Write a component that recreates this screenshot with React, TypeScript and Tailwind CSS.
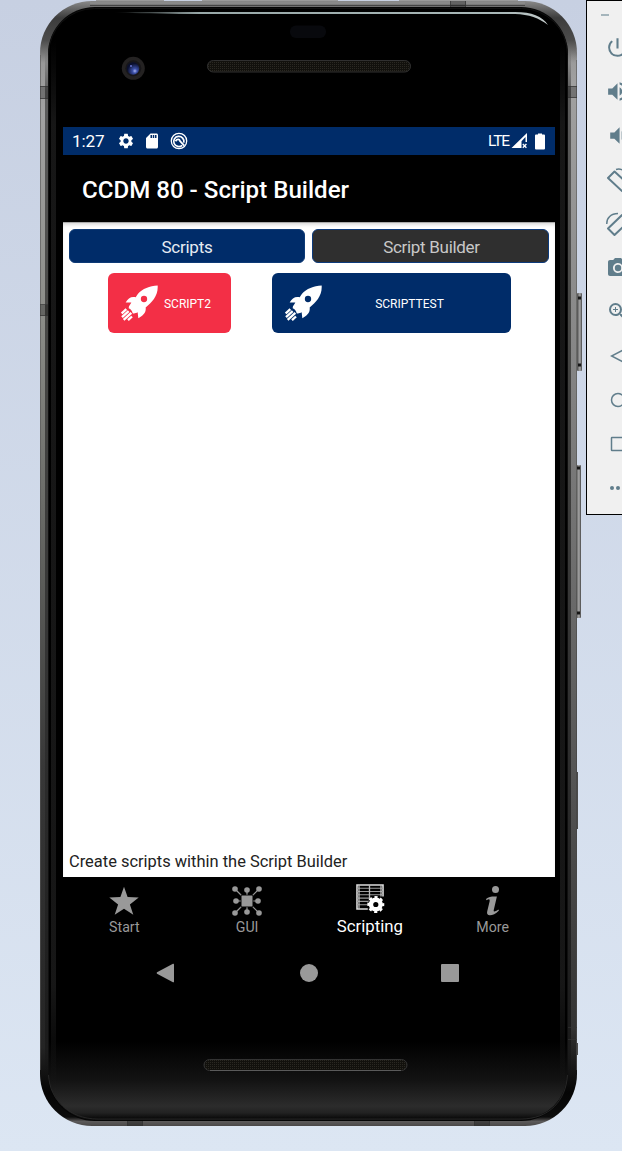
import type { ReactNode } from "react";
import {
  MdCameraAlt,
  MdPowerSettingsNew,
  MdSdCard,
  MdSettings,
  MdVolumeDown,
  MdVolumeUp,
  MdZoomIn,
} from "react-icons/md";

function DeviceBody() {
  return (
    <svg className="absolute inset-0" width="622" height="1151" viewBox="0 0 622 1151" fill="none" aria-hidden="true">
      <defs>
        <linearGradient id="rail" x1="0" y1="0" x2="0" y2="1">
          <stop offset="0" stopColor="#8a8a8a" />
          <stop offset="0.006" stopColor="#6a6a6a" />
          <stop offset="0.015" stopColor="#3c3c3c" />
          <stop offset="0.035" stopColor="#4c4c4c" />
          <stop offset="0.055" stopColor="#989898" />
          <stop offset="0.1" stopColor="#a2a2a2" />
          <stop offset="0.28" stopColor="#8c8d88" />
          <stop offset="0.45" stopColor="#6a6b67" />
          <stop offset="0.68" stopColor="#383838" />
          <stop offset="0.93" stopColor="#242424" />
          <stop offset="0.97" stopColor="#050505" />
          <stop offset="0.992" stopColor="#0c0c0c" />
          <stop offset="0.996" stopColor="#5c5a5a" />
          <stop offset="1" stopColor="#4a4848" />
        </linearGradient>
        <linearGradient id="railInner" x1="0" y1="0" x2="0" y2="1">
          <stop offset="0" stopColor="#5c5c5c" stopOpacity="0" />
          <stop offset="0.04" stopColor="#5c5c5c" />
          <stop offset="0.25" stopColor="#484846" />
          <stop offset="0.6" stopColor="#333" />
          <stop offset="0.95" stopColor="#1c1c1c" />
          <stop offset="1" stopColor="#101010" stopOpacity="0" />
        </linearGradient>
        <linearGradient id="railRight" x1="0" y1="0" x2="0" y2="1">
          <stop offset="0" stopColor="#a0a0a0" stopOpacity="0" />
          <stop offset="0.04" stopColor="#a0a0a0" />
          <stop offset="0.3" stopColor="#858585" />
          <stop offset="0.65" stopColor="#5c5c5c" />
          <stop offset="0.95" stopColor="#333" />
          <stop offset="1" stopColor="#111" stopOpacity="0" />
        </linearGradient>
        <linearGradient id="glass" x1="0" y1="0" x2="0" y2="1">
          <stop offset="0" stopColor="#000" />
          <stop offset="0.93" stopColor="#000" />
          <stop offset="0.965" stopColor="#131313" />
          <stop offset="0.988" stopColor="#2c2c2c" />
          <stop offset="0.994" stopColor="#222" />
          <stop offset="1" stopColor="#050505" />
        </linearGradient>
        <linearGradient id="edge" x1="0" y1="0" x2="0" y2="1">
          <stop offset="0" stopColor="#1c1c1c" stopOpacity="0" />
          <stop offset="0.08" stopColor="#1c1c1c" />
          <stop offset="0.9" stopColor="#1c1c1c" />
          <stop offset="1" stopColor="#1c1c1c" stopOpacity="0" />
        </linearGradient>
        <linearGradient id="glare" x1="0" y1="0" x2="1" y2="0">
          <stop offset="0" stopColor="#98a8a8" stopOpacity="0" />
          <stop offset="0.2" stopColor="#98a8a8" />
          <stop offset="0.9" stopColor="#a9b8b8" />
          <stop offset="1" stopColor="#c5cccc" />
        </linearGradient>
        <linearGradient id="button" x1="0" y1="0" x2="1" y2="0">
          <stop offset="0" stopColor="#4a4a4a" />
          <stop offset="0.5" stopColor="#9a9a9a" />
          <stop offset="0.8" stopColor="#8a8a8a" />
          <stop offset="1" stopColor="#303030" />
        </linearGradient>
        <radialGradient id="lens" cx="0.65" cy="0.7" r="0.6">
          <stop offset="0" stopColor="#a8b4f6" />
          <stop offset="0.3" stopColor="#3c50a8" />
          <stop offset="1" stopColor="#0a0f2c" />
        </radialGradient>
        <pattern id="mesh" width="2" height="2" patternUnits="userSpaceOnUse">
          <rect width="2" height="2" fill="#12110d" />
          <rect width="1" height="1" fill="#2a2822" />
        </pattern>
      </defs>
      <path d="M96 0.5H164M202 0.5H338M399 0.5H518" stroke="#9b9b9b" />
      <rect x="577" y="293" width="5" height="78" rx="1" fill="url(#button)" />
      <path d="M578 298H581M578 365H581" stroke="#161616" strokeWidth="3" />
      <rect x="576" y="465" width="5" height="153" rx="1" fill="url(#button)" />
      <path d="M577 468H580M577 613H580" stroke="#161616" strokeWidth="3" />
      <path d="M577.5 772V829M577.5 1043V1055" stroke="#4b4b4b" />
      <rect x="40" y="1" width="537" height="1125" rx="52" fill="url(#rail)" />
      <rect x="45" y="50" width="3" height="1030" fill="url(#railInner)" />
      <rect x="568" y="50" width="3" height="1030" fill="url(#railInner)" />
      <rect x="571" y="50" width="5" height="1030" fill="url(#railRight)" />
      <path d="M40.5 55V1070M576.5 60V1070" stroke="#555" strokeOpacity=".6" />
      <path d="M90 3H525" stroke="#8c8c8c" strokeWidth="2" strokeOpacity=".8" />
      <path d="M90 5.5H525" stroke="#444" />
      <g fill="#000" fillOpacity=".28">
        <path d="M40 86H48V99H40ZM568 86H577V98H568ZM40 305H48V316H40ZM450 1H466V8H450ZM127 1120H143V1126H127ZM474 1120H490V1126H474Z" />
      </g>
      <path d="M40 86.5H48M40 98.5H48M568 86.5H577M568 97.5H577M40 304.5H48M40 315.5H48M450.5 1V7M465.5 1V7M568 1027.5H577M568 1039.5H577M127.5 1120V1126M142.5 1120V1126M474.5 1120V1126M489.5 1120V1126" stroke="#333" strokeOpacity=".7" />
      <rect x="48" y="7" width="520" height="1114" rx="47" fill="#050505" />
      <rect x="48.5" y="8.5" width="519" height="1111" rx="46" fill="url(#glass)" stroke="#101010" />
      <rect x="51" y="40" width="5" height="1050" fill="url(#edge)" fillOpacity=".8" />
      <rect x="560" y="40" width="5" height="1050" fill="url(#edge)" fillOpacity=".8" />
      <path d="M48.5 1075C50 1100 69 1119 98 1119H521C549 1119 566 1101 567.5 1075" stroke="#2c2c2c" strokeWidth=".8" />
      <path d="M112 12.3C130 12 155 12 180 12H515C532 12 542 16 548 25C539 18 529 14.5 515 14H180C150 13.5 128 13 112 12.3Z" fill="url(#glare)" />
      <rect x="290" y="25.5" width="36" height="12.5" rx="6" fill="#08090d" />
      <circle cx="133.3" cy="68.3" r="11.5" fill="#242222" />
      <circle cx="133.3" cy="68.3" r="8" fill="#171619" />
      <circle cx="133" cy="68.5" r="6.2" fill="url(#lens)" />
      <circle cx="131" cy="66" r="1" fill="#6472ce" />
      <rect x="207.5" y="60.5" width="203" height="11.5" rx="5.7" fill="url(#mesh)" stroke="#303030" />
      <rect x="204" y="1059.5" width="203" height="11" rx="5.5" fill="url(#mesh)" stroke="#333" />
      <path d="M210 1070.5H401" stroke="#5a5a5a" />
    </svg>
  );
}

function Rocket() {
  return (
    <svg width="37" height="36" viewBox="63 59 111 107" fill="#fff" className="shrink-0">
      <path
        fillRule="evenodd"
        d="M173 60C149 61 127 70 114 85L107 95C94 92 84 97 77 111L94 111C91 117 86 121 86 128C93 131 96 135 98 143C103 145 109 142 113 140L115 158C130 150 139 141 137 126C156 110 175 91 173 60ZM132 91A9.5 9.5 0 1 1 132 110A9.5 9.5 0 1 1 132 91Z"
      />
      <path d="M65 144L79 131M66 155L86 137M71 163L94 142M84 164L96 153" stroke="#fff" strokeWidth="7" />
    </svg>
  );
}

function ScriptButton({ label, className }: { label: string; className: string }) {
  return (
    <button className={`flex h-[60px] items-center rounded-md pr-[14px] pl-[13px] text-[12px] text-white ${className}`}>
      <Rocket />
      <span className="flex-1 pt-px text-center">{label}</span>
    </button>
  );
}

function NavItem({ label, active, children }: { label: string; active?: boolean; children: ReactNode }) {
  return (
    <div className={`flex flex-1 flex-col items-center pt-[6px] ${active ? "text-white" : "text-[#999]"}`}>
      <div className="flex h-9 items-center justify-center">{children}</div>
      <span className={active ? "text-[16.8px] leading-[15px]" : "text-[14.2px] leading-4"}>{label}</span>
    </div>
  );
}

function Tool({ children }: { children: ReactNode }) {
  return <div className="flex h-[44.1px] items-center justify-center">{children}</div>;
}

function EmulatorTools() {
  return (
    <aside className="ml-[9px] flex h-[515px] w-[63px] shrink-0 flex-col border border-black bg-[#f0f0f0] text-[#607d8b]">
      <div className="mt-[13px] ml-[14px] h-[2px] w-[8px] bg-[#a5b5bc]" />
      <div className="mt-[9.5px] flex flex-col">
        <Tool><MdPowerSettingsNew size={25} /></Tool>
        <Tool><MdVolumeUp size={25} /></Tool>
        <Tool><MdVolumeDown size={25} /></Tool>
        <Tool>
          <svg width="24" height="26" viewBox="606 167 24 26" fill="none" stroke="currentColor" strokeWidth="2">
            <path d="M608 178L614.5 171.5L628.5 184.5L622 191Z" strokeLinejoin="round" />
            <path d="M616 169.5C621 168 626 171 628 176" strokeWidth="1.5" />
          </svg>
        </Tool>
        <Tool>
          <svg width="24" height="26" viewBox="606 211 24 26" fill="none" stroke="currentColor" strokeWidth="2">
            <path d="M608 228.5L622 215L628.5 221.5L614.5 235Z" strokeLinejoin="round" />
            <path d="M606.8 224C606.5 218 611 213.5 618 213.5" strokeWidth="1.5" />
          </svg>
        </Tool>
        <Tool><MdCameraAlt size={24} /></Tool>
        <Tool><MdZoomIn size={24} /></Tool>
        <Tool>
          <svg width="16" height="16" viewBox="0 0 16 16" fill="none" stroke="currentColor" strokeWidth="1.5"><path d="M14 1.5V14.5L1.5 8Z" /></svg>
        </Tool>
        <Tool>
          <svg width="16" height="16" viewBox="0 0 16 16" fill="none" stroke="currentColor" strokeWidth="1.5"><circle cx="8" cy="8" r="6.5" /></svg>
        </Tool>
        <Tool>
          <svg width="16" height="16" viewBox="0 0 16 16" fill="none" stroke="currentColor" strokeWidth="1.5"><rect x="1.5" y="1.5" width="13" height="13" rx=".5" /></svg>
        </Tool>
        <Tool>
          <svg width="18" height="6" viewBox="0 0 18 6" fill="currentColor"><circle cx="3" cy="3" r="2" /><circle cx="9" cy="3" r="2" /><circle cx="15" cy="3" r="2" /></svg>
        </Tool>
      </div>
    </aside>
  );
}

export default function App() {
  return (
    <div className="relative h-[1151px] w-[622px] overflow-hidden bg-linear-to-b from-[#c7d0e2] to-[#dce6f3] font-[Roboto,sans-serif]">
      <DeviceBody />
      <div className="relative flex pl-10">
        <div className="w-[537px] shrink-0 pt-[127px] pr-[22px] pl-[23px]">
          <div className="flex h-7 items-center bg-[#002c69] pr-[10px] pl-[9px] text-white">
            <span className="w-[46px] pt-[2px] text-[17.2px] leading-none tracking-[-0.2px]">1:27</span>
            <MdSettings size={18} className="-ml-px" />
            <MdSdCard size={18} className="ml-[8px]" />
            <svg width="18" height="18" viewBox="0 0 18 18" fill="none" stroke="currentColor" className="ml-[9px]">
              <circle cx="9" cy="9" r="7.7" strokeWidth="1.3" />
              <path d="M12.2 13.3A5.1 5.1 0 1 1 13.8 10.6" strokeWidth="1.7" />
              <path d="M5.5 9.2C7 6.6 9.5 6.8 10 9L14.3 13.6" strokeWidth="1.8" />
            </svg>
            <span className="ml-auto pt-px text-[15.5px] leading-none tracking-[-1.1px]">LTE</span>
            <svg width="18" height="16" viewBox="0 0 18 16" className="ml-[2px]">
              <path d="M.5 15L16 0V9H14.5V4L10.5 8.3V15Z" fill="#fff" />
              <path d="M11.8 11L15.4 14.8M15.4 11L11.8 14.8" stroke="#fff" strokeWidth="1.3" />
            </svg>
            <svg width="10" height="17" viewBox="0 0 10 17" className="ml-[6px]">
              <path d="M3 1.5V.5H7V1.5H9Q10 1.5 10 2.5V15.5Q10 16.5 9 16.5H1Q0 16.5 0 15.5V2.5Q0 1.5 1 1.5Z" fill="#fff" />
            </svg>
          </div>
          <header className="flex h-[67px] items-center bg-black pt-[3px] pl-[19px]">
            <h1 className="text-[24.1px] leading-none font-medium whitespace-nowrap text-white">CCDM 80 - Script Builder</h1>
          </header>
          <main className="flex h-[655px] flex-col bg-white shadow-[inset_0_1px_0_#aaa,inset_0_4px_4px_-2px_#ccc]">
            <div className="mt-[7px] flex gap-[7px] px-[6px]">
              <button className="h-[34px] w-[236px] rounded-md border border-[#0d3a76] bg-[#002c69] pt-[3px] text-[17px] leading-none tracking-[-0.25px] text-[#e6ebf2]">Scripts</button>
              <button className="h-[34px] w-[237px] rounded-md border border-[#0c3a7c] bg-[#2f2f2f] pt-[3px] pl-[2px] text-[17px] leading-none tracking-[-0.3px] text-[#c8c8c8]">Script Builder</button>
            </div>
            <div className="mt-[10px] ml-[45px] flex gap-[41px]">
              <ScriptButton label="SCRIPT2" className="w-[123px] bg-[#f32f46]" />
              <ScriptButton label="SCRIPTTEST" className="w-[239px] bg-[#002c69]" />
            </div>
            <p className="mt-auto mb-[6px] ml-[6px] text-[16.45px] leading-[18px] text-[#222]">Create scripts within the Script Builder</p>
          </main>
          <nav className="flex h-[66px] bg-black pr-px">
            <NavItem label="Start">
              <svg width="30" height="30" viewBox="0 0 30 30" fill="currentColor">
                <path d="M15 .8L18.6 11L29.7 11.5L20.9 18.5L24.3 28.7L15 22.8L5.7 28.7L9.1 18.5L.3 11.5L11.4 11Z" />
              </svg>
            </NavItem>
            <NavItem label="GUI">
              <svg width="30" height="30" viewBox="0 0 30 30" fill="currentColor" stroke="currentColor">
                <path d="M3 3L10 10M27 3L20 10M3 27L10 20M27 27L20 20M15 4V26M4 15H26" strokeWidth="1.2" />
                <rect x="8.7" y="8.7" width="12.6" height="12.6" fill="#000" stroke="none" />
                <rect x="9.5" y="9.5" width="11" height="11" stroke="none" />
                <g stroke="none">
                  <circle cx="3" cy="3" r="2.8" /><circle cx="27" cy="3" r="2.8" />
                  <circle cx="3" cy="27" r="2.8" /><circle cx="27" cy="27" r="2.8" />
                  <circle cx="15" cy="4" r="2.8" /><circle cx="15" cy="26" r="2.8" />
                  <circle cx="4" cy="15" r="2.8" /><circle cx="26" cy="15" r="2.8" />
                </g>
              </svg>
            </NavItem>
            <NavItem label="Scripting" active>
              <svg width="30" height="30" viewBox="0 0 30 30" fill="none" stroke="currentColor" className="mb-1">
                <path d="M2 1H28V25H2Z" stroke="#ddd" strokeWidth="1.6" />
                <path d="M2 4.2H28M2 7.5H28M2 10.8H28M2 14.1H28M2 17.4H28M2 20.7H28" stroke="#999" strokeWidth="1.1" />
                <path d="M4 1V25M14.5 1V25M26 1V25" stroke="#bbb" strokeWidth="1.3" />
                <path d="M20.8 12.5H29V29H12.8V20.5Z" fill="#000" stroke="none" />
                <circle cx="20.8" cy="20.5" r="8" fill="#000" stroke="none" />
                <circle cx="20.8" cy="20.5" r="4.8" strokeWidth="4.4" />
                <circle cx="20.8" cy="20.5" r="7.3" strokeWidth="2.4" strokeDasharray="3.1 2.633" strokeDashoffset="1.55" />
              </svg>
            </NavItem>
            <NavItem label="More">
              <svg width="16" height="30" viewBox="0 0 16 30" fill="currentColor">
                <circle cx="10.5" cy="3.6" r="3.5" />
                <path d="M1 13C4 10.5 7.5 10.2 11.9 10.5L8.7 24.2C8.5 26 9.7 26 13.3 23.5L14 24.5C10.5 28.2 7 29.5 4.5 29.3C2 29 1.8 27 2.3 25L4.6 15.5C4.9 13.3 4.5 12.7 1.5 14.2Z" />
              </svg>
            </NavItem>
          </nav>
          <div className="flex h-[60px] items-center bg-black pl-[93px] text-[#999]">
            <svg width="18" height="20" viewBox="0 0 18 20" fill="currentColor"><path d="M17 .8Q18 .3 18 1.5V18.5Q18 19.7 17 19.2L1 10.7Q.3 10 1 9.3Z" /></svg>
            <div className="ml-[125.5px] size-[18px] rounded-full bg-[#999]" />
            <div className="ml-[123.5px] size-[18px] rounded-[1px] bg-[#999]" />
          </div>
        </div>
        <EmulatorTools />
      </div>
    </div>
  );
}
